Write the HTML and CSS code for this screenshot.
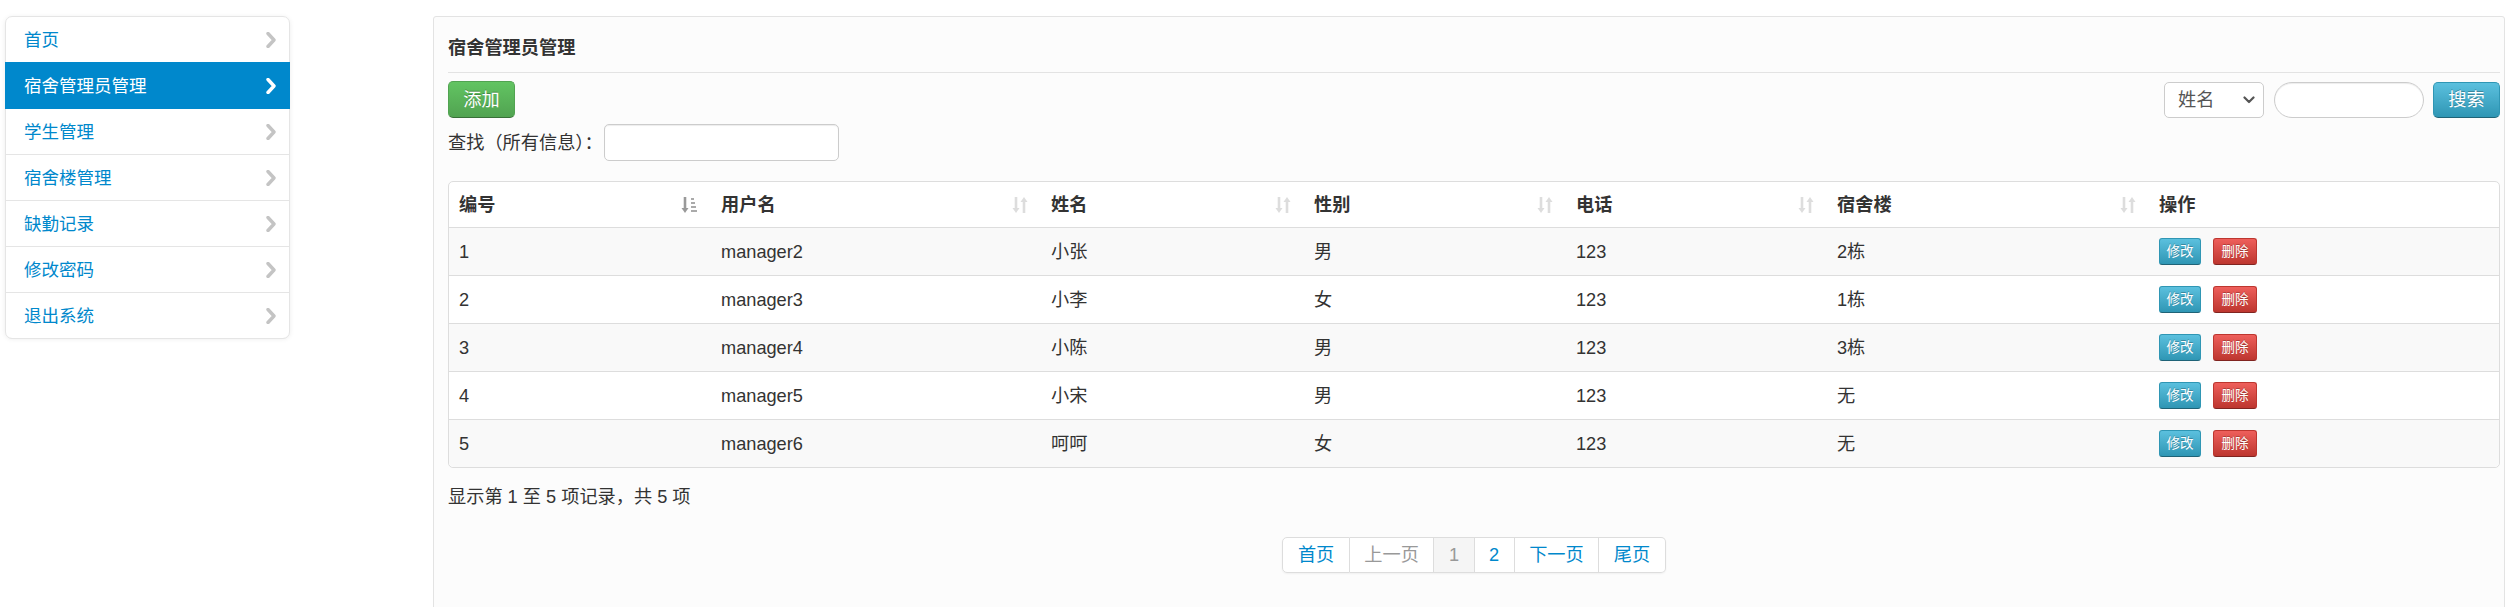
FILE: index.html
```html
<!DOCTYPE html>
<html lang="zh-CN">
<head>
<meta charset="utf-8">
<title>宿舍管理员管理</title>
<link rel="stylesheet" href="styles.css">
</head>
<body>
<div class="page">
  <ul class="sidenav">
    <li><a href="#"><span>首页</span><svg class="chev" viewBox="0 0 10 16" width="10" height="16"><path d="M2 1.5 L8 8 L2 14.5" fill="none" stroke="currentColor" stroke-width="3.4" stroke-linecap="round" stroke-linejoin="round"/></svg></a></li>
    <li class="active"><a href="#"><span>宿舍管理员管理</span><svg class="chev" viewBox="0 0 10 16" width="10" height="16"><path d="M2 1.5 L8 8 L2 14.5" fill="none" stroke="currentColor" stroke-width="3.4" stroke-linecap="round" stroke-linejoin="round"/></svg></a></li>
    <li><a href="#"><span>学生管理</span><svg class="chev" viewBox="0 0 10 16" width="10" height="16"><path d="M2 1.5 L8 8 L2 14.5" fill="none" stroke="currentColor" stroke-width="3.4" stroke-linecap="round" stroke-linejoin="round"/></svg></a></li>
    <li><a href="#"><span>宿舍楼管理</span><svg class="chev" viewBox="0 0 10 16" width="10" height="16"><path d="M2 1.5 L8 8 L2 14.5" fill="none" stroke="currentColor" stroke-width="3.4" stroke-linecap="round" stroke-linejoin="round"/></svg></a></li>
    <li><a href="#"><span>缺勤记录</span><svg class="chev" viewBox="0 0 10 16" width="10" height="16"><path d="M2 1.5 L8 8 L2 14.5" fill="none" stroke="currentColor" stroke-width="3.4" stroke-linecap="round" stroke-linejoin="round"/></svg></a></li>
    <li><a href="#"><span>修改密码</span><svg class="chev" viewBox="0 0 10 16" width="10" height="16"><path d="M2 1.5 L8 8 L2 14.5" fill="none" stroke="currentColor" stroke-width="3.4" stroke-linecap="round" stroke-linejoin="round"/></svg></a></li>
    <li><a href="#"><span>退出系统</span><svg class="chev" viewBox="0 0 10 16" width="10" height="16"><path d="M2 1.5 L8 8 L2 14.5" fill="none" stroke="currentColor" stroke-width="3.4" stroke-linecap="round" stroke-linejoin="round"/></svg></a></li>
  </ul>

  <div class="panel">
    <div class="panel-title">宿舍管理员管理</div>
    <div class="toolbar">
      <button class="btn btn-success">添加</button>
      <div class="search-right">
        <div class="select-box"><span>姓名</span><svg viewBox="0 0 12 8" width="12" height="8"><path d="M1.5 1.5 L6 6 L10.5 1.5" fill="none" stroke="#555" stroke-width="2.2" stroke-linecap="round" stroke-linejoin="round"/></svg></div>
        <input class="pill-input" type="text">
        <button class="btn btn-info">搜索</button>
      </div>
    </div>
    <div class="filter-row">
      <label>查找（所有信息）：</label><input class="filter-input" type="text">
    </div>

    <table class="data-table">
      <colgroup>
        <col class="c1"><col class="c2"><col class="c3"><col class="c4"><col class="c5"><col class="c6"><col class="c7">
      </colgroup>
      <thead>
        <tr>
          <th><div class="th-in"><span>编号</span><svg class="sort" viewBox="0 0 18 20" width="18" height="20"><path d="M4 2 V15" stroke="#999" stroke-width="2.6"/><path d="M0.5 13 L4 18 L7.5 13 Z" fill="#999"/><rect x="10" y="3" width="3" height="2" fill="#aaa"/><rect x="10" y="7" width="4" height="2" fill="#aaa"/><rect x="10" y="11" width="5" height="2" fill="#aaa"/><rect x="10" y="15" width="6" height="2" fill="#aaa"/></svg></div></th>
          <th><div class="th-in"><span>用户名</span><svg class="sort" viewBox="0 0 18 20" width="18" height="20"><path d="M5 2 V15" stroke="#ddd" stroke-width="2.6"/><path d="M1.5 13 L5 18 L8.5 13 Z" fill="#ddd"/><path d="M13 5 V18" stroke="#ddd" stroke-width="2.6"/><path d="M9.5 7 L13 2 L16.5 7 Z" fill="#ddd"/></svg></div></th>
          <th><div class="th-in"><span>姓名</span><svg class="sort" viewBox="0 0 18 20" width="18" height="20"><path d="M5 2 V15" stroke="#ddd" stroke-width="2.6"/><path d="M1.5 13 L5 18 L8.5 13 Z" fill="#ddd"/><path d="M13 5 V18" stroke="#ddd" stroke-width="2.6"/><path d="M9.5 7 L13 2 L16.5 7 Z" fill="#ddd"/></svg></div></th>
          <th><div class="th-in"><span>性别</span><svg class="sort" viewBox="0 0 18 20" width="18" height="20"><path d="M5 2 V15" stroke="#ddd" stroke-width="2.6"/><path d="M1.5 13 L5 18 L8.5 13 Z" fill="#ddd"/><path d="M13 5 V18" stroke="#ddd" stroke-width="2.6"/><path d="M9.5 7 L13 2 L16.5 7 Z" fill="#ddd"/></svg></div></th>
          <th><div class="th-in"><span>电话</span><svg class="sort" viewBox="0 0 18 20" width="18" height="20"><path d="M5 2 V15" stroke="#ddd" stroke-width="2.6"/><path d="M1.5 13 L5 18 L8.5 13 Z" fill="#ddd"/><path d="M13 5 V18" stroke="#ddd" stroke-width="2.6"/><path d="M9.5 7 L13 2 L16.5 7 Z" fill="#ddd"/></svg></div></th>
          <th><div class="th-in"><span>宿舍楼</span><svg class="sort" viewBox="0 0 18 20" width="18" height="20"><path d="M5 2 V15" stroke="#ddd" stroke-width="2.6"/><path d="M1.5 13 L5 18 L8.5 13 Z" fill="#ddd"/><path d="M13 5 V18" stroke="#ddd" stroke-width="2.6"/><path d="M9.5 7 L13 2 L16.5 7 Z" fill="#ddd"/></svg></div></th>
          <th><div class="th-in"><span>操作</span></div></th>
        </tr>
      </thead>
      <tbody>
        <tr><td>1</td><td>manager2</td><td>小张</td><td>男</td><td>123</td><td>2栋</td><td><div class="ops"><button class="mini mini-info">修改</button><button class="mini mini-danger">删除</button></div></td></tr>
        <tr><td>2</td><td>manager3</td><td>小李</td><td>女</td><td>123</td><td>1栋</td><td><div class="ops"><button class="mini mini-info">修改</button><button class="mini mini-danger">删除</button></div></td></tr>
        <tr><td>3</td><td>manager4</td><td>小陈</td><td>男</td><td>123</td><td>3栋</td><td><div class="ops"><button class="mini mini-info">修改</button><button class="mini mini-danger">删除</button></div></td></tr>
        <tr><td>4</td><td>manager5</td><td>小宋</td><td>男</td><td>123</td><td>无</td><td><div class="ops"><button class="mini mini-info">修改</button><button class="mini mini-danger">删除</button></div></td></tr>
        <tr><td>5</td><td>manager6</td><td>呵呵</td><td>女</td><td>123</td><td>无</td><td><div class="ops"><button class="mini mini-info">修改</button><button class="mini mini-danger">删除</button></div></td></tr>
      </tbody>
    </table>

    <div class="info">显示第 1 至 5 项记录，共 5 项</div>

    <div class="pager-wrap">
      <ul class="pager">
        <li><a href="#">首页</a></li>
        <li class="disabled"><a href="#">上一页</a></li>
        <li class="current"><a href="#">1</a></li>
        <li><a href="#">2</a></li>
        <li><a href="#">下一页</a></li>
        <li><a href="#">尾页</a></li>
      </ul>
    </div>
  </div>
</div>
</body>
</html>
```

FILE: styles.css
```css
* { box-sizing: border-box; }

html, body {
  margin: 0;
  padding: 0;
  background: #fff;
}

body {
  font-family: "Liberation Sans", "Noto Sans CJK SC", sans-serif;
  font-size: 18.2px;
  line-height: 26px;
  color: #333;
}

.page {
  display: flex;
  align-items: flex-start;
}

/* Sidebar */
.sidenav {
  list-style: none;
  margin: 16px 0 0 5px;
  padding: 0;
  width: 285px;
  background: #fff;
  border-radius: 7px;
  box-shadow: 0 1px 5px rgba(0, 0, 0, 0.08);
}

.sidenav li a {
  display: flex;
  align-items: center;
  justify-content: space-between;
  margin: 0 0 -1px;
  padding: 9.5px 13px 9.5px 18px;
  border: 1px solid #e5e5e5;
  color: #0088cc;
  text-decoration: none;
  font-size: 17.5px;
}

.sidenav li:first-child a {
  border-radius: 7px 7px 0 0;
}

.sidenav li:last-child a {
  border-radius: 0 0 7px 7px;
}

.sidenav .chev {
  color: #c4c4c4;
}

.sidenav li.active a {
  background: #0088cc;
  border-color: #0088cc;
  color: #fff;
  position: relative;
  z-index: 1;
}

.sidenav li.active .chev {
  color: #fff;
}

/* Panel */
.panel {
  margin: 16px 0 0 143px;
  width: 2072px;
  min-height: 640px;
  background: #fcfcfc;
  border: 1px solid #e3e3e3;
  border-radius: 3px;
  padding: 18px 4px 0 14px;
}

.panel-title {
  font-weight: bold;
  line-height: 26px;
  padding-bottom: 11px;
  border-bottom: 1px solid #e3e3e3;
  color: #333;
}

.toolbar {
  margin-top: 8px;
  display: flex;
  align-items: center;
  justify-content: space-between;
  height: 37px;
}

.search-right {
  display: flex;
  align-items: center;
  gap: 10px;
}

.btn {
  font-family: inherit;
  font-size: 18.2px;
  line-height: 26px;
  height: 37px;
  padding: 0;
  white-space: nowrap;
  color: #fff;
  border-radius: 5px;
  border: 1px solid rgba(0, 0, 0, 0.15);
  text-shadow: 0 -1px 0 rgba(0, 0, 0, 0.25);
  cursor: pointer;
}

.btn-success {
  width: 67px;
  background: linear-gradient(#62c462, #51a351);
  border-color: #51a351 #51a351 #387038;
}

.btn-info {
  width: 67px;
  height: 36px;
  margin-left: -1px;
  background: linear-gradient(#5bc0de, #2f96b4);
  border-color: #2f96b4 #2f96b4 #1f6377;
}

.select-box {
  width: 100px;
  height: 36px;
  border: 1px solid #ccc;
  border-radius: 5px;
  background: #fff;
  display: flex;
  align-items: center;
  justify-content: space-between;
  padding: 0 8px 0 13px;
  color: #555;
}

.pill-input {
  width: 150px;
  height: 36px;
  border: 1px solid #ccc;
  border-radius: 18px;
  background: #fff;
  box-shadow: inset 0 1px 1px rgba(0, 0, 0, 0.075);
  outline: none;
}

.filter-row {
  margin-top: 6px;
  display: flex;
  align-items: center;
  height: 37px;
}

.filter-row label {
  color: #333;
}

.filter-input {
  width: 235px;
  height: 37px;
  border: 1px solid #ccc;
  border-radius: 5px;
  background: #fff;
  box-shadow: inset 0 1px 1px rgba(0, 0, 0, 0.075);
  margin-left: 1px;
  outline: none;
}

/* Table */
.data-table {
  margin-top: 20px;
  width: 2052px;
  table-layout: fixed;
  border-collapse: separate;
  border-spacing: 0;
  border: 1px solid #ddd;
  border-radius: 5px;
  background: #fff;
}

.data-table col.c1 { width: 262px; }
.data-table col.c2 { width: 330px; }
.data-table col.c3 { width: 263px; }
.data-table col.c4 { width: 262px; }
.data-table col.c5 { width: 261px; }
.data-table col.c6 { width: 322px; }
.data-table col.c7 { width: auto; }

.data-table th {
  text-align: left;
  font-weight: bold;
  padding: 9.5px 12px 9.5px 10px;
  line-height: 26px;
  height: 45px;
  color: #333;
}

.th-in {
  display: flex;
  align-items: center;
  justify-content: space-between;
  height: 26px;
}

.sort {
  flex: none;
}

.data-table td {
  padding: 10.5px 10px;
  line-height: 26px;
  height: 48px;
  border-top: 1px solid #ddd;
  color: #333;
  vertical-align: middle;
}

.data-table tbody tr:nth-child(odd) td {
  background: #f9f9f9;
}

.data-table tbody tr:last-child td:first-child {
  border-bottom-left-radius: 5px;
}

.data-table tbody tr:last-child td:last-child {
  border-bottom-right-radius: 5px;
}

.ops {
  display: flex;
  align-items: center;
  gap: 12px;
  height: 26px;
}

.mini {
  font-family: inherit;
  font-size: 13.5px;
  line-height: 17px;
  height: 27px;
  padding: 0;
  white-space: nowrap;
  color: #fff;
  border-radius: 3px;
  border: 1px solid rgba(0, 0, 0, 0.15);
  text-shadow: 0 -1px 0 rgba(0, 0, 0, 0.25);
  flex: none;
}

.mini-info {
  width: 42px;
  background: linear-gradient(#5bc0de, #2f96b4);
  border-color: #2f96b4 #2f96b4 #1f6377;
}

.mini-danger {
  width: 44px;
  background: linear-gradient(#ee5f5b, #bd362f);
  border-color: #bd362f #bd362f #802420;
}

.info {
  margin-top: 16px;
  line-height: 26px;
  color: #333;
}

.pager-wrap {
  width: 2052px;
  margin-top: 27px;
  display: flex;
  justify-content: center;
}

.pager {
  list-style: none;
  margin: 0;
  padding: 0;
  display: flex;
  border-radius: 5px;
  box-shadow: 0 1px 2px rgba(0, 0, 0, 0.05);
}

.pager li a {
  display: block;
  padding: 4px 14.5px;
  line-height: 26px;
  border: 1px solid #ddd;
  border-left-width: 0;
  background: #fff;
  color: #0088cc;
  text-decoration: none;
}

.pager li:first-child a {
  border-left-width: 1px;
  border-radius: 5px 0 0 5px;
}

.pager li:last-child a {
  border-radius: 0 5px 5px 0;
}

.pager li.disabled a {
  color: #999;
  background: #fff;
}

.pager li.current a {
  color: #999;
  background: #f5f5f5;
}
```
